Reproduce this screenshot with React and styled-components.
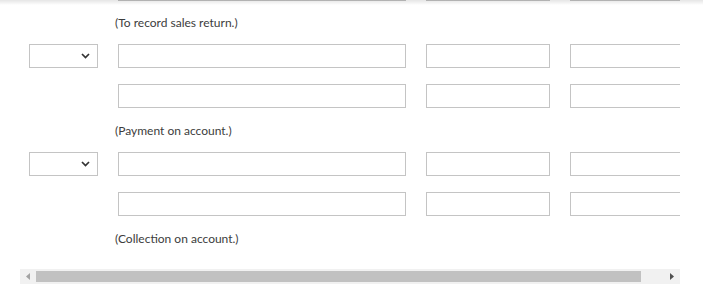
import React from 'react';
import styled, { createGlobalStyle } from 'styled-components';

const GlobalStyle = createGlobalStyle`
  body {
    margin: 0;
    background: #fff;
    font-family: Lato, "Liberation Sans", sans-serif;
    color: #333;
  }
`;

const entries = [
  { label: '(To record sales return.)' },
  { label: '(Payment on account.)' },
  { label: '(Collection on account.)' },
];

function Chevron() {
  return (
    <svg width="9" height="6" viewBox="0 0 9 6">
      <path d="M1 1l3.5 3.5L8 1" fill="none" stroke="#333" strokeWidth="1.7" />
    </svg>
  );
}

function Arrow({ dir, color }) {
  const d = dir === 'left' ? 'M4 0v7L0 3.5z' : 'M0 0v7l4-3.5z';
  return (
    <svg width="4" height="7" viewBox="0 0 4 7">
      <path d={d} fill={color} />
    </svg>
  );
}

function InputRow({ withSelect }) {
  return (
    <Row>
      {withSelect ? (
        <Select>
          <Chevron />
        </Select>
      ) : (
        <Spacer />
      )}
      <Input wide />
      <Input />
      <Input />
    </Row>
  );
}

export default function App() {
  return (
    <Page>
      <GlobalStyle />
      <Scroller>
        <Content>
          <CutRow>
            <Spacer />
            <Input wide />
            <Input />
            <Input />
          </CutRow>
          <Label>{entries[0].label}</Label>
          <Group>
            <InputRow withSelect />
            <InputRow />
          </Group>
          <Label>{entries[1].label}</Label>
          <Group>
            <InputRow withSelect />
            <InputRow />
          </Group>
          <Label>{entries[2].label}</Label>
        </Content>
      </Scroller>
      <Scrollbar>
        <ArrowButton>
          <Arrow dir="left" color="#a3a3a3" />
        </ArrowButton>
        <Thumb />
        <ArrowButton end>
          <Arrow dir="right" color="#505050" />
        </ArrowButton>
      </Scrollbar>
      <TopShadow />
    </Page>
  );
}

const Page = styled.div`
  position: relative;
  width: 703px;
  height: 299px;
  overflow: hidden;
`;

const TopShadow = styled.div`
  position: absolute;
  top: 0;
  left: 0;
  right: 0;
  height: 5px;
  background: linear-gradient(rgba(0, 0, 0, 0.1), rgba(0, 0, 0, 0));
  pointer-events: none;
`;

const Scroller = styled.div`
  margin-left: 20px;
  width: 660px;
  overflow: hidden;
`;

const Content = styled.div`
  width: 900px;
  padding-left: 9px;
  margin-top: -23px;
`;

const Row = styled.div`
  display: flex;
  gap: 20px;
  height: 24px;
`;

const CutRow = styled(Row)`
  & > * {
    border-color: #a8a8a8;
  }
`;

const Group = styled.div`
  display: flex;
  flex-direction: column;
  gap: 16px;
`;

const Spacer = styled.div`
  width: 69px;
  flex: none;
`;

const Select = styled.div`
  box-sizing: border-box;
  width: 69px;
  height: 24px;
  flex: none;
  border: 1px solid #c4c4c4;
  background: #fff;
  display: flex;
  align-items: center;
  justify-content: flex-end;
  padding-right: 7px;
`;

const Input = styled.div`
  box-sizing: border-box;
  width: ${p => (p.wide ? '288px' : '124px')};
  height: 24px;
  flex: none;
  border: 1px solid #c4c4c4;
  background: #fff;
`;

const Label = styled.div`
  height: 44px;
  display: flex;
  align-items: center;
  padding-left: 86px;
  font-size: 12px;
  color: #3c3c3c;

  ${CutRow} + & {
    height: 43px;
  }
`;

const Scrollbar = styled.div`
  margin: 9px 0 0 20px;
  width: 660px;
  height: 15px;
  background: #f1f1f1;
  display: flex;
  align-items: center;
`;

const ArrowButton = styled.div`
  width: ${p => (p.end ? '39px' : '16px')};
  height: 15px;
  flex: none;
  display: flex;
  align-items: center;
  justify-content: ${p => (p.end ? 'flex-end' : 'center')};
  padding-right: ${p => (p.end ? '6px' : '0')};
  box-sizing: border-box;
`;

const Thumb = styled.div`
  flex: 1;
  height: 11px;
  background: #c1c1c1;
`;
